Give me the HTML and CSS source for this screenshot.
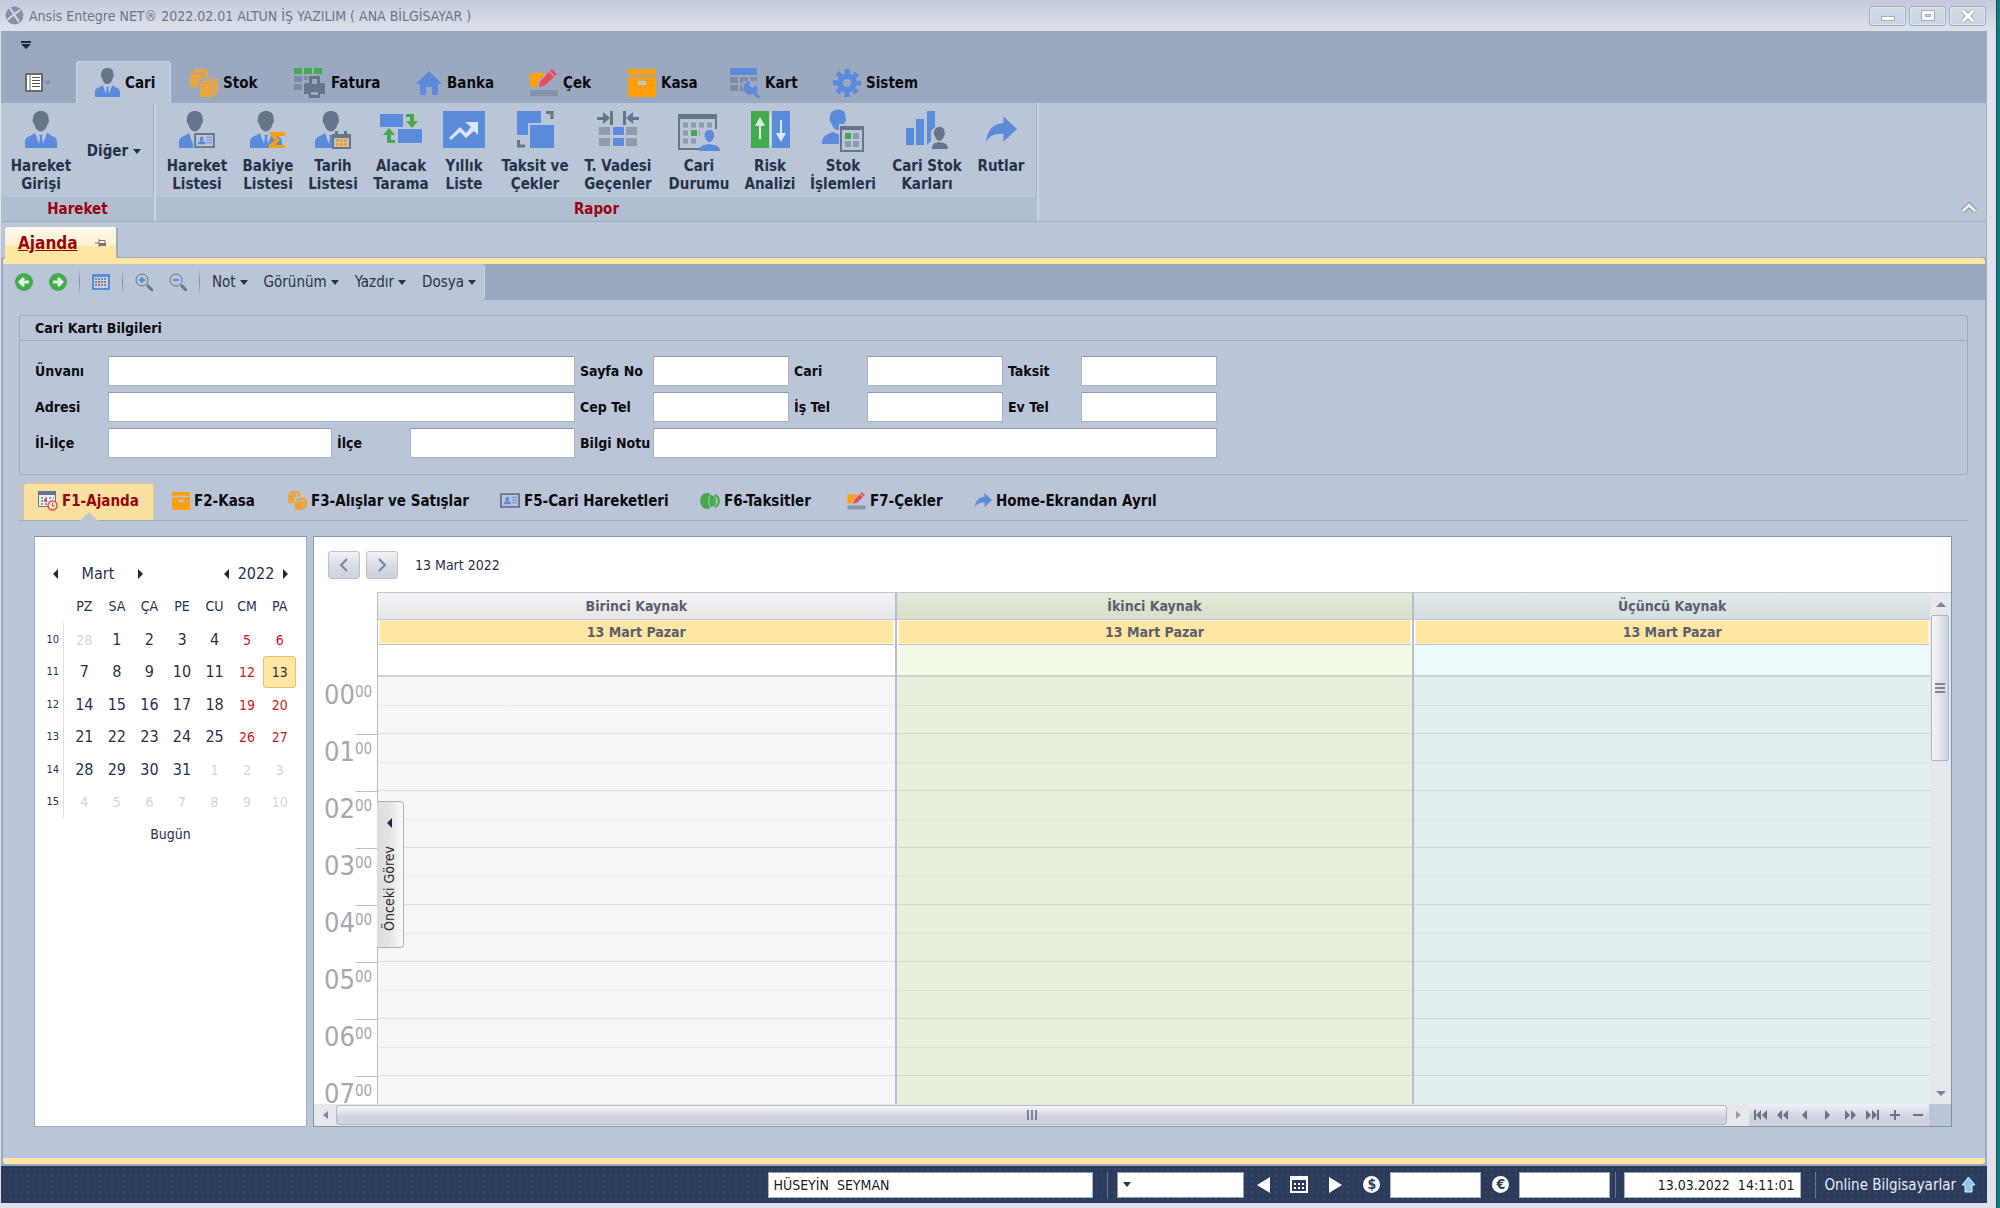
FILE: index.html
```html
<!DOCTYPE html>
<html lang="tr">
<head>
<meta charset="utf-8">
<title>Ansis Entegre NET</title>
<link rel="stylesheet" href="styles.css">
</head>
<body>
<svg class="defs" aria-hidden="true">
  <symbol id="head" viewBox="0 0 32 37"><path d="M8 8C8 2 12 0 16 0s8 2 7.5 8c1 1 .5 4-.8 4.6C22 17 19 20.5 15.8 20.5S10 17 9 12.6C7.6 12 7 9 8 8z"/></symbol>
  <symbol id="person" viewBox="0 0 32 37"><use href="#head" width="32" height="37" fill="#677489"/><path fill="#5b8bdb" d="M0 37v-5c0-5 2-6 5-7l5-3 4 11 1-7-1-2h4l-1 2 1 7 4-11 5 3c3 1 5 2 5 7v5z"/></symbol>
  <symbol id="boxes" viewBox="0 0 28 28"><g fill="#eba53c"><path d="M0 5h12v5H9v8H0zM1 4l4-4h12l-3 4zM14 5l4-4v7h-4zM10 15h13v13H10zM11 14l4-4h13l-4 4zM24 15l4-4v12l-4 4z"/></g></symbol>
  <symbol id="edit" viewBox="0 0 28 28"><path fill="#ff9f0a" d="M0 4h16L8 13v5H0z"/><path fill="#ec4b5c" d="M9 18l1-5L19 3l5 5-10 9zM20 2l2-2 5 5-2 2z"/><path fill="#8793a9" d="M0 21h28v6H0z"/></symbol>
  <symbol id="box" viewBox="0 0 28 28"><path fill="#ff9f0a" d="M0 0h28v6H0zM0 8h28v20H0z"/><path fill="#bac6d8" d="M10 12h8v4h-8z"/></symbol>
  <symbol id="share" viewBox="0 0 32 28"><path fill="#5b8bdb" d="M0 26C1 14 8 7 18 7V0l14 13-14 13v-8C9 17 4 20 0 26z"/></symbol>
  <symbol id="idcard" viewBox="0 0 22 16"><path fill="#bac6d8" stroke="#677489" stroke-width="2" d="M1 1h20v14H1z"/><path fill="#5b8bdb" d="M4 12c0-3 1-3 3-3 0-1-1-2-1-3 0-3 4-3 4 0 0 1-1 2-1 3 2 0 3 0 3 3z"/><path stroke="#5b8bdb" d="M13 4.500h6M13 7.500h6M13 10.500h6"/></symbol>
</svg>

<div class="window">
  <header class="titlebar">
    <svg width="19" height="19" viewBox="0 0 19 19"><circle cx="9.500" cy="9.500" r="9" fill="#8492a8"/><path d="M5 2l9 14M15 4L2 14" stroke="#d5dae6" stroke-width="2"/></svg>
    <h1>Ansis Entegre NET® 2022.02.01 ALTUN İŞ YAZILIM ( ANA BİLGİSAYAR )</h1>
    <div class="win-buttons">
      <button aria-label="Simge durumuna küçült"><svg width="16" height="14"><path d="M1.500 7.500h13v4h-13z" fill="#fff" stroke="#a3aabc"/></svg></button>
      <button aria-label="Ekranı kapla"><svg width="16" height="14"><path d="M1.500 1.500h13v10h-13z" fill="#f6f8fb" stroke="#a3aabc"/><path d="M5.500 5.500h5v2h-5z" fill="#c9d5e3" stroke="#a3aabc"/></svg></button>
      <button aria-label="Kapat"><svg width="16" height="14"><path d="M3 2l10 10M13 2L3 12" stroke="#a3aabc" stroke-width="5"/><path d="M3 2l10 10M13 2L3 12" stroke="#fff" stroke-width="3"/></svg></button>
    </div>
  </header>

  <div class="client">
    <div class="quick"><button aria-label="Hızlı erişim"><svg width="10" height="8"><path d="M0 0h10v2H0zM0 3h10L5 8z" fill="#1d2a40"/></svg></button></div>
    <nav class="ribbon-tabs">
      <button class="app" aria-label="Menü"><svg width="26" height="20"><path d="M1 1h16v17H1z" fill="#fff" stroke="#6b6b6b" stroke-width="2"/><path d="M5 1v17" stroke="#6b6b6b"/><path d="M7 4.500h8M7 7.500h8M7 10.500h8M7 13.500h8" stroke="#555"/><path d="M19 8h7l-3.500 4z" fill="#848d9c"/></svg></button>
      <button class="on"><svg width="25" height="29" viewBox="0 0 32 37"><use href="#person" width="32" height="37"/></svg>Cari</button>
      <button><svg width="28" height="28"><use href="#boxes" width="28" height="28"/></svg>Stok</button>
      <button><svg width="32" height="30" viewBox="0 0 32 30"><path fill="#43ab4b" d="M0 0h8v6H0zM10 0h8v6h-8zM20 0h8v6h-8z"/><path fill="#7f8ca3" d="M0 8h8v6H0zM0 16h8v6H0zM10 8h4v4h-4z"/><path fill="#677489" fill-rule="evenodd" d="M15 8h11v7h3c2 0 2 1 2 2v9h-5v4H15v-4h-5v-9c0-1 0-2 2-2h3zM18 11v5h5v-5zM17 24v3h7v-3z"/></svg>Fatura</button>
      <button><svg width="26" height="24" viewBox="0 0 26 24"><path fill="#5b8bdb" d="M13 0l13 13h-4v11h-6v-8h-6v8H4V13H0z"/></svg>Banka</button>
      <button><svg width="28" height="28"><use href="#edit" width="28" height="28"/></svg>Çek</button>
      <button><svg width="28" height="28"><use href="#box" width="28" height="28"/></svg>Kasa</button>
      <button><svg width="30" height="30" viewBox="0 0 30 30"><path fill="#5b8bdb" d="M0 0h27v7H0z"/><path fill="#7f8ca3" d="M0 9h8v6H0zM10 9h8v4h-5v2h-3zM0 17h8v6H0zM10 17h2v3l3 3h-5zM20 9h7v4h-7z"/><path fill="#5b8bdb" d="M18 13l2 1-1 4 4 2 3-3 1 2c1 3 0 4-1 5l4 5-2 2-5-5c-4 2-8 0-9-4-1-3 0-7 4-9z"/></svg>Kart</button>
      <button><svg width="28" height="28" viewBox="-14 -14 28 28"><circle r="11.500" fill="none" stroke="#5b8bdb" stroke-width="5" stroke-dasharray="5 4.030" stroke-dashoffset="2.500"/><circle r="10" fill="#5b8bdb"/><circle r="4" fill="#9ba9c0"/></svg>Sistem</button>
    </nav>

    <section class="ribbon">
      <div class="group g1">
        <div class="tools">
          <button class="tool"><svg width="32" height="37"><use href="#person" width="32" height="37"/></svg><span>Hareket<br>Girişi</span></button>
          <button class="more">Diğer<i class="caret"></i></button>
        </div>
        <h2>Hareket</h2>
      </div>
      <div class="group g2">
        <div class="tools">
          <button class="tool"><svg width="36" height="37"><use href="#person" width="32" height="37"/><path fill="#bac6d8" d="M14 21h22v16H14z"/><use href="#idcard" x="15" y="22" width="21" height="15"/></svg><span>Hareket<br>Listesi</span></button>
          <button class="tool"><svg width="36" height="37"><use href="#person" width="32" height="37"/><path fill="#ff9f0a" d="M20 21h15v4h-9l4 4-5 5h10v3H19v-3l6-5-5-5z"/></svg><span>Bakiye<br>Listesi</span></button>
          <button class="tool"><svg width="36" height="38"><use href="#person" width="32" height="37"/><path fill="#677489" d="M17 23h3v-3h3v3h6v-3h3v3h4v15H17z"/><path fill="#bac6d8" d="M19 27h15v9H19z"/><path stroke="#ff9f0a" stroke-width="3" stroke-dasharray="3 1" d="M21 29.500h11M21 33.500h11"/></svg><span>Tarih<br>Listesi</span></button>
          <button class="tool"><svg width="42" height="37"><path fill="#5b8bdb" d="M0 3h23v13H0zM18 18h24v14H18z"/><path fill="#43ab4b" d="M26 3h8v7h4l-6 7-6-7h4V6h-4zM9 17l6 7h-4v5h4v3H7v-8H3z"/></svg><span>Alacak<br>Tarama</span></button>
          <button class="tool"><svg width="42" height="37"><path fill="#5b8bdb" d="M0 0h42v37H0z"/><path fill="#dbe5f5" d="M22 11h13v13l-4-4-8 7-6-6-9 8-2-2 11-11 6 6 5-6z"/></svg><span>Yıllık<br>Liste</span></button>
          <button class="tool"><svg width="37" height="37"><path fill="#5b8bdb" d="M0 0h24v12H11v12H0zM13 14h24v23H13z"/><path fill="none" stroke="#677489" stroke-width="3" d="M29 1.500h6V8M1.500 29v6H8"/></svg><span>Taksit ve<br>Çekler</span></button>
          <button class="tool"><svg width="42" height="37"><path fill="#909cae" d="M2 16h11v8H2zM2 27h11v8H2zM29 16h11v8H29zM29 27h11v8H29z"/><path fill="#5b8bdb" d="M16 16h11v8H16zM16 27h11v8H16z"/><path fill="#677489" d="M0 6h6V1l7 6-7 6V9H0zM13 0h3v14h-3zM26 0h3v14h-3zM29 7l7-6v5h6v3h-6v4z"/></svg><span>T. Vadesi<br>Geçenler</span></button>
          <button class="tool"><svg width="42" height="38"><path fill="none" stroke="#677489" stroke-width="2" d="M1 4h37v14M22 38H1V4"/><path fill="#677489" d="M0 3h39v5H0z"/><path stroke="#909cae" stroke-width="5" stroke-dasharray="5 3" d="M5 14h29M5 22h17M5 30h15"/><path fill="#43ab4b" d="M13 19h6v6h-6z"/><use href="#head" x="22" y="18" width="19" height="24" fill="#5b8bdb"/><path fill="#5b8bdb" d="M21 40c0-5 4-6 10-7 7 1 11 2 11 7z"/></svg><span>Cari<br>Durumu</span></button>
          <button class="tool"><svg width="39" height="37"><path fill="#43ab4b" d="M0 0h18v37H0z"/><path fill="#5b8bdb" d="M21 0h18v37H21z"/><path fill="#dce8ee" d="M19 4h1v30h-1zM9 6l5 9h-4v13H8V15H4zM30 31l5-9h-4V9h-2v13h-4z"/></svg><span>Risk<br>Analizi</span></button>
          <button class="tool"><svg width="42" height="37"><use href="#head" x="0" y="-2" width="32" height="38" fill="#5b8bdb"/><path fill="#5b8bdb" d="M0 33c0-8 3-9 11-12l7 3v9z"/><path fill="#bac6d8" d="M17 13h25v27H17z"/><path fill="none" stroke="#677489" stroke-width="2" d="M19 16h22v24H19z"/><path fill="#677489" d="M18 15h24v4H18z"/><path fill="#43ab4b" d="M23 22h6v6h-6z"/><path fill="#909cae" d="M31 22h6v6h-6zM23 30h6v6h-6zM31 30h6v6h-6z"/></svg><span>Stok<br>İşlemleri</span></button>
          <button class="tool"><svg width="42" height="38"><path fill="#5b8bdb" d="M0 17h8v17H0zM10 8h8v26h-8zM21 0h8v16l-4 4v10l-4 4z"/><use href="#head" x="22" y="16" width="23" height="25" fill="#677489"/><path fill="#677489" d="M26 38c0-5 2-6 7-7 6 1 9 2 9 7z"/></svg><span>Cari Stok<br>Karları</span></button>
          <button class="tool"><svg width="31" height="37"><use href="#share" y="5" width="31" height="28"/></svg><span>Rutlar</span></button>
        </div>
        <h2>Rapor</h2>
      </div>
      <button class="collapse" aria-label="Şeridi daralt"><svg width="18" height="14"><path d="M3 10l6-6 6 6" fill="none" stroke="#838b9c" stroke-width="5"/><path d="M3 10l6-6 6 6" fill="none" stroke="#eef1f6" stroke-width="3"/></svg></button>
    </section>

    <div class="doc-tabs">
      <a href="#ajanda" class="doc-tab"><span>Ajanda</span><svg width="11" height="10"><path d="M0 5h4M4 1v8M4 2.500h6v5H4" stroke="#777" fill="none" stroke-width="1"/><path d="M4 5h7v3H4z" fill="#777"/></svg></a>
    </div>

    <main class="doc" id="ajanda">
      <div class="toolbar">
        <div class="bar">
          <button aria-label="Geri"><svg width="18" height="18"><circle cx="9" cy="9" r="9" fill="#43ab4b"/><path d="M14 9H6M9 5L5 9l4 4" fill="none" stroke="#e4efe6" stroke-width="3"/></svg></button>
          <button aria-label="İleri"><svg width="18" height="18"><circle cx="9" cy="9" r="9" fill="#43ab4b"/><path d="M4 9h8M9 5l4 4-4 4" fill="none" stroke="#e4efe6" stroke-width="3"/></svg></button>
          <i class="sep"></i>
          <button aria-label="Takvim"><svg width="18" height="16"><path fill="#c6d0e0" stroke="#5b8bdb" stroke-width="2" d="M1 1h16v14H1z"/><path fill="#5b8bdb" d="M0 0h18v3H0z"/><path stroke="#7d899c" stroke-width="2" stroke-dasharray="2 1" d="M3 5h12M3 8h12M3 11h12"/><path fill="#ec4b5c" d="M6 7h2v2H6z"/></svg></button>
          <i class="sep"></i>
          <button aria-label="Yakınlaştır"><svg width="18" height="18"><circle cx="7" cy="7" r="6" fill="none" stroke="#677489"/><path d="M4 7h6M7 4v6" stroke="#5b8bdb" stroke-width="2"/><path d="M12 12l6 6" stroke="#677489" stroke-width="3"/></svg></button>
          <button aria-label="Uzaklaştır"><svg width="18" height="18"><circle cx="7" cy="7" r="6" fill="none" stroke="#677489"/><path d="M4 7h6" stroke="#5b8bdb" stroke-width="2"/><path d="M12 12l6 6" stroke="#677489" stroke-width="3"/></svg></button>
          <i class="sep"></i>
          <button class="menu">Not<i class="caret"></i></button>
          <button class="menu">Görünüm<i class="caret"></i></button>
          <button class="menu">Yazdır<i class="caret"></i></button>
          <button class="menu">Dosya<i class="caret"></i></button>
        </div>
      </div>

      <section class="card">
        <h2>Cari Kartı Bilgileri</h2>
        <form class="fields">
          <label for="unvan">Ünvanı</label><input id="unvan" class="wide">
          <label for="sayfa">Sayfa No</label><input id="sayfa">
          <label for="cari">Cari</label><input id="cari">
          <label for="taksit">Taksit</label><input id="taksit">
          <label for="adres">Adresi</label><input id="adres" class="wide">
          <label for="cep">Cep Tel</label><input id="cep">
          <label for="is">İş Tel</label><input id="is">
          <label for="ev">Ev Tel</label><input id="ev">
          <label for="il">İl-İlçe</label><input id="il">
          <label for="ilce">İlçe</label><input id="ilce">
          <label for="not">Bilgi Notu</label><input id="not" class="note">
        </form>
      </section>

      <nav class="views">
        <button class="on"><svg width="20" height="20"><path fill="#eceef0" stroke="#677489" d="M.5.500h17v15H.5z"/><path fill="#677489" d="M0 0h18v4H0z"/><path stroke="#909cae" stroke-width="2" stroke-dasharray="2 2" d="M3 7h13M3 10h8M3 13h7"/><path fill="#ec4b5c" d="M6 8h3v3H6z"/><circle cx="14.500" cy="14.500" r="4.500" fill="#f6e3b4" stroke="#ec4b5c" stroke-width="1.500"/><path fill="none" stroke="#677489" d="M14.500 12v3h2"/></svg>F1-Ajanda</button>
        <button><svg width="18" height="18"><use href="#box" width="18" height="18"/></svg>F2-Kasa</button>
        <button><svg width="19" height="19"><use href="#boxes" width="19" height="19"/></svg>F3-Alışlar ve Satışlar</button>
        <button><svg width="20" height="15"><use href="#idcard" width="20" height="15"/></svg>F5-Cari Hareketleri</button>
        <button><svg width="20" height="16"><ellipse cx="7" cy="8" rx="7" ry="8" fill="#43ab4b"/><path fill="none" stroke="#bac6d8" d="M11 1c-3 4-3 10 0 14"/><path fill="none" stroke="#43ab4b" stroke-width="2" d="M13 3c3 3 3 7 0 10M15 2c5 2 5 10 0 12"/></svg>F6-Taksitler</button>
        <button><svg width="19" height="18"><use href="#edit" width="19" height="18"/></svg>F7-Çekler</button>
        <button><svg width="17" height="15"><use href="#share" width="17" height="15"/></svg>Home-Ekrandan Ayrıl</button>
      </nav>

      <div class="agenda">
        <aside class="calendar">
          <div class="cal-head">
            <button aria-label="Önceki ay"><i class="tri left"></i></button><span class="m">Mart</span><button aria-label="Sonraki ay"><i class="tri right"></i></button>
            <button class="yr" aria-label="Önceki yıl"><i class="tri left"></i></button><span>2022</span><button aria-label="Sonraki yıl"><i class="tri right"></i></button>
          </div>
          <table>
            <thead><tr><th></th><th>PZ</th><th>SA</th><th>ÇA</th><th>PE</th><th>CU</th><th>CM</th><th>PA</th></tr></thead>
            <tbody>
              <tr><th>10</th><td class="out">28</td><td>1</td><td>2</td><td>3</td><td>4</td><td class="we">5</td><td class="we">6</td></tr>
              <tr><th>11</th><td>7</td><td>8</td><td>9</td><td>10</td><td>11</td><td class="we">12</td><td class="today"><span>13</span></td></tr>
              <tr><th>12</th><td>14</td><td>15</td><td>16</td><td>17</td><td>18</td><td class="we">19</td><td class="we">20</td></tr>
              <tr><th>13</th><td>21</td><td>22</td><td>23</td><td>24</td><td>25</td><td class="we">26</td><td class="we">27</td></tr>
              <tr><th>14</th><td>28</td><td>29</td><td>30</td><td>31</td><td class="out">1</td><td class="out">2</td><td class="out">3</td></tr>
              <tr><th>15</th><td class="out">4</td><td class="out">5</td><td class="out">6</td><td class="out">7</td><td class="out">8</td><td class="out">9</td><td class="out">10</td></tr>
            </tbody>
          </table>
          <button class="today-btn">Bugün</button>
        </aside>

        <section class="scheduler">
          <div class="sch-head">
            <button aria-label="Önceki gün"><svg width="10" height="14"><path d="M8 1L2 7l6 6" fill="none" stroke="#7c8699" stroke-width="2"/></svg></button>
            <button aria-label="Sonraki gün"><svg width="10" height="14"><path d="M2 1l6 6-6 6" fill="none" stroke="#7c8699" stroke-width="2"/></svg></button>
            <span>13 Mart 2022</span>
          </div>
          <div class="sch-body">
            <div class="hours">
              <div>00<sup>00</sup></div><div>01<sup>00</sup></div><div>02<sup>00</sup></div><div>03<sup>00</sup></div><div>04<sup>00</sup></div><div>05<sup>00</sup></div><div>06<sup>00</sup></div><div>07<sup>00</sup></div>
            </div>
            <div class="resources">
              <div class="res gray"><h3>Birinci Kaynak</h3><h4>13 Mart Pazar</h4><div class="allday"></div><div class="slots"></div></div>
              <div class="res green"><h3>İkinci Kaynak</h3><h4>13 Mart Pazar</h4><div class="allday"></div><div class="slots"></div></div>
              <div class="res blue"><h3>Üçüncü Kaynak</h3><h4>13 Mart Pazar</h4><div class="allday"></div><div class="slots"></div></div>
              <button class="prev-task"><i class="tri left"></i><span>Önceki Görev</span></button>
            </div>
            <div class="vscroll"><button aria-label="Yukarı"><i class="tri up"></i></button><div class="vthumb"><i></i><i></i><i></i></div><button aria-label="Aşağı"><i class="tri down"></i></button></div>
          </div>
          <div class="hscroll">
            <button aria-label="Sola"><i class="tri left"></i></button>
            <div class="hthumb"><i></i><i></i><i></i></div>
            <button aria-label="Sağa"><i class="tri right"></i></button>
            <div class="pager">
              <button aria-label="İlk"><svg width="13" height="10"><path d="M0 0h2v10H0zM7 0v10L2 5zM13 0v10L8 5z"/></svg></button>
              <button aria-label="Geri sayfa"><svg width="11" height="10"><path d="M5 0v10L0 5zM11 0v10L6 5z"/></svg></button>
              <button aria-label="Geri"><svg width="6" height="10"><path d="M5 0v10L0 5z"/></svg></button>
              <button aria-label="İleri"><svg width="6" height="10"><path d="M0 0v10l5-5z"/></svg></button>
              <button aria-label="İleri sayfa"><svg width="11" height="10"><path d="M0 0v10l5-5zM6 0v10l5-5z"/></svg></button>
              <button aria-label="Son"><svg width="13" height="10"><path d="M0 0v10l5-5zM6 0v10l5-5zM11 0h2v10h-2z"/></svg></button>
              <button aria-label="Ekle"><svg width="10" height="10"><path d="M4 0h2v4h4v2H6v4H4V6H0V4h4z"/></svg></button>
              <button aria-label="Çıkar"><svg width="10" height="10"><path d="M0 4h10v2H0z"/></svg></button>
            </div>
            <div class="corner"></div>
          </div>
        </section>
      </div>
    </main>

    <footer class="status">
      <input class="user" aria-label="Kullanıcı" value="HÜSEYİN  SEYMAN">
      <i class="sep"></i>
      <button class="combo" aria-label="Döviz seçimi"><i class="caret"></i></button>
      <button class="st" aria-label="Önceki"><svg width="13" height="16"><path fill="#fff" d="M13 0v16L0 8z"/></svg></button>
      <button class="st" aria-label="Takvim"><svg width="18" height="17"><path fill="none" stroke="#fff" stroke-width="2" d="M1 1h16v15H1z"/><path fill="#fff" d="M0 0h18v4H0z"/><path stroke="#fff" stroke-width="2" stroke-dasharray="2 2" d="M4 8h11M4 12h11"/></svg></button>
      <button class="st" aria-label="Sonraki"><svg width="13" height="16"><path fill="#fff" d="M0 0v16l13-8z"/></svg></button>
      <label class="coin" for="usd">$</label><input id="usd" class="rate">
      <label class="coin" for="eur">€</label><input id="eur" class="rate">
      <i class="sep"></i>
      <input class="clock" aria-label="Tarih ve saat" value="13.03.2022  14:11:01">
      <i class="sep"></i>
      <a href="#online">Online Bilgisayarlar <svg width="15" height="17"><path fill="#8fc7f0" stroke="#d8edfb" d="M7.500 1L14 9h-3v7H4V9H1z"/></svg></a>
    </footer>
  </div>
</div>
</body>
</html>
```
FILE: styles.css
```css
:root {
  --panel: #bac6d8;
  --deep: #9ba9c0;
  --line: #9eabc2;
  --yellow: #ffe6a2;
  --ink: #26334a;
}
* { box-sizing: border-box; }
body {
  margin: 0;
  height: 100vh;
  overflow: hidden;
  border-right: 3px solid #028383;
  font: 15px/18px "DejaVu Sans Condensed", "Noto Sans", sans-serif;
  color: var(--ink);
  background: #dfe2ea;
}
h1, h2, h3, h4 { margin: 0; font-size: inherit; }
button {
  display: flex;
  align-items: center;
  justify-content: center;
  padding: 0;
  border: 0;
  background: none;
  font: inherit;
  color: inherit;
}
svg { display: block; flex: none; }
.defs { position: absolute; width: 0; height: 0; }
a { color: inherit; }
input {
  min-width: 0;
  width: 100%;
  height: 30px;
  border: 1px solid #a5b2c8;
  border-top-color: #8f9db5;
  border-radius: 0;
  background: #fff;
  font: inherit;
  font-size: 14px;
  color: #1c1c1c;
}
.caret { border: 4px solid transparent; border-top: 5px solid var(--ink); border-bottom: 0; }
.tri { border: 5px solid transparent; }
.tri.left { border-right-color: #1d2a40; border-left: 0; }
.tri.right { border-left-color: #1d2a40; border-right: 0; }
.tri.up { border-bottom-color: #7d8594; border-top: 0; }
.tri.down { border-top-color: #7d8594; border-bottom: 0; }

.window {
  display: flex;
  flex-direction: column;
  height: 100%;
  padding: 0 9px 5px 1px;
  border-right: 1px solid #3a4048;
}
.titlebar {
  display: flex;
  align-items: center;
  gap: 5px;
  height: 31px;
  flex: none;
  margin: 0 -9px 0 -1px;
  padding: 0 10px 0 5px;
  background: linear-gradient(#c4cadb, #dde2ea);
}
.titlebar h1 { font-size: 14px; font-weight: 400; color: #69758b; }
.win-buttons { display: flex; gap: 3px; margin-left: auto; }
.win-buttons button {
  width: 37px;
  height: 20px;
  border: 1px solid #a3aabc;
  border-radius: 3px;
  background: linear-gradient(#d3dbe2, #c8d6e4);
  box-shadow: inset 0 0 0 1px #dfe5ec;
}

.client { display: flex; flex-direction: column; flex: 1; min-height: 0; background: var(--deep); border-right: 1px solid #a3adc3; }
.quick { height: 30px; flex: none; padding: 10px 0 0 20px; }
.ribbon-tabs {
  display: grid;
  grid-template-columns: 75px 95px 104px 122px 114px 98px 102px 103px 120px;
  height: 42px;
  flex: none;
  font-size: 15px;
  font-weight: 700;
  color: #0c0c10;
}
.ribbon-tabs button { justify-content: flex-start; gap: 5px; padding: 1px 0 0 19px; }
.ribbon-tabs .app { padding-left: 24px; }
.ribbon-tabs .on { background: var(--panel); border-radius: 4px 4px 0 0; box-shadow: inset 1px 1px #c9d3e2, inset -1px 0 #c9d3e2; }

.ribbon {
  display: flex;
  height: 119px;
  flex: none;
  background: var(--panel);
  border-bottom: 1px solid var(--line);
  font-weight: 700;
}
.group { display: flex; flex-direction: column; border-right: 2px solid #c9d3e2; box-shadow: inset -1px 0 #a6b3c9; }
.g1 { width: 155px; }
.g2 { width: 883px; }
.tools { display: grid; height: 96px; padding-top: 8px; }
.g1 .tools { grid-template-columns: 80px 66px; }
.g2 .tools { padding-left: 5px; grid-template-columns: 72px 70px 60px 76px 50px 92px 74px 88px 54px 92px 76px 72px; }
.tool { flex-direction: column; justify-content: flex-start; gap: 9px; white-space: nowrap; }
.tool svg { height: 37px; overflow: visible; }
.more { gap: 5px; height: 80px; }
.group h2 { flex: 1; background: #b1bed2; color: #98050f; line-height: 24px; text-align: center; font-size: 15px; }
.collapse { margin: auto 8px 6px auto; }

.doc-tabs { height: 36px; flex: none; padding: 5px 0 0 4px; background: var(--panel); border-bottom: 1px solid var(--line); }
.doc-tab {
  display: flex;
  align-items: center;
  justify-content: space-between;
  width: 113px;
  height: 31px;
  padding: 0 10px 0 13px;
  border-right: 2px solid var(--line);
  border-radius: 3px 3px 0 0;
  background: linear-gradient(#fffaf0, #fff0cb 60%, var(--yellow) 62%);
  color: #98050f;
  font-size: 17px;
  font-weight: 700;
}
.doc {
  display: flex;
  flex-direction: column;
  flex: 1;
  min-height: 0;
  margin: 0 1px 0 2px;
  border-top: 6px solid var(--yellow);
  border-bottom: 6px solid var(--yellow);
  border-radius: 3px;
  background: var(--panel);
}
.toolbar { height: 36px; flex: none; background: var(--deep); }
.bar { display: flex; align-items: center; width: 482px; height: 36px; padding-left: 4px; background: var(--panel); border-right: 1px solid #c9d3e2; border-radius: 0 4px 4px 0; }
.bar button { width: 34px; }
.sep { width: 1px; height: 26px; margin: 0 4px; background: linear-gradient(transparent, #7f8ca3, transparent); }
.bar .menu { flex: auto; width: auto; gap: 4px; font-size: 15px; }

.card { margin: 15px 17px 0 16px; border: 1px solid var(--line); border-radius: 3px; box-shadow: inset 0 0 0 1px #bfcadb; color: #0c0c10; font-size: 14px; font-weight: 700; }
.card h2 { padding-left: 15px; line-height: 24px; border-bottom: 1px solid var(--line); }
.fields {
  display: grid;
  grid-template-columns: 73px 224px 78px 165px 78px 136px 78px 136px 78px 136px;
  grid-auto-rows: 30px;
  row-gap: 6px;
  align-items: center;
  padding: 15px 0 16px 15px;
}
.fields label { white-space: nowrap; }
.fields label:nth-of-type(n+2) { padding-left: 5px; }
.fields label[for="adres"], .fields label[for="il"] { padding-left: 0; }
.fields .wide { grid-column: span 3; }
.fields .note { grid-column: span 5; }

.views {
  display: grid;
  grid-template-columns: 131px 120px 212px 200px 147px 128px 220px;
  height: 38px;
  flex: none;
  margin: 8px 17px 0 16px;
  padding-left: 4px;
  border-bottom: 1px solid var(--line);
  color: #0c0c10;
  font-size: 15px;
  font-weight: 700;
}
.views button { justify-content: flex-start; gap: 4px; padding-left: 14px; padding-bottom: 2px; white-space: nowrap; }
.views button:nth-child(2) { padding-left: 18px; }
.views .on { position: relative; background: #f8e0a0; border: 1px solid #d8c58f; border-bottom: 0; border-radius: 3px 3px 0 0; color: #98050f; }
.views .on::after {
  content: "";
  position: absolute;
  left: 56px;
  bottom: -1px;
  border: 9px solid transparent;
  border-top: 0;
  border-bottom-color: var(--panel);
}

.agenda { display: flex; flex: 1; min-height: 0; gap: 6px; padding: 15px 33px 31px 31px; }
.calendar { width: 273px; flex: none; padding: 26px 10px 0 4px; border: 1px solid #a0adc3; border-top-color: #8593aa; background: #fff; }
.cal-head { display: flex; align-items: center; height: 22px; padding: 0 8px 0 14px; font-size: 16px; }
.cal-head .m { width: 80px; text-align: center; }
.cal-head .yr { margin-left: auto; }
.cal-head span:not(.m) { width: 54px; text-align: center; }
.calendar table { width: 100%; table-layout: fixed; border-collapse: collapse; text-align: center; }
.calendar th, .calendar td { padding: 0; height: 32px; font-size: 16px; font-weight: 400; }
.calendar tr:nth-child(odd) td { height: 33px; }
.calendar thead th { height: 38px; padding-top: 4px; font-size: 14px; }
.calendar thead th:first-child { width: 29px; }
.calendar tbody th {
  padding-right: 9px;
  background: linear-gradient(#dcdfe4, #dcdfe4) 24px 0 / 1px 100% no-repeat;
  font-size: 11px;
  text-align: right;
}
.calendar .we { color: #cf1820; font-size: 14px; }
.calendar .out { color: #d3d5d9; font-size: 14px; }
.calendar .today { font-size: 14px; }
.today span { display: grid; place-items: center; height: 32px; border: 1px solid #e5c365; border-radius: 3px; background: var(--yellow); }
.today-btn { margin: 7px auto 0; padding-left: 6px; font-size: 14px; }

.scheduler { display: flex; flex-direction: column; flex: 1; min-width: 0; border: 1px solid #8593aa; background: #fff; }
.sch-head { display: flex; align-items: center; gap: 6px; height: 55px; flex: none; padding-left: 14px; font-size: 14px; }
.sch-head button { width: 32px; height: 28px; border: 1px solid #bcc1cd; border-radius: 3px; background: linear-gradient(#f2f3f6, #d9dde6 50%, #cbd1df); }
.sch-head span { margin-left: 11px; }
.sch-body { display: flex; flex: 1; min-height: 0; overflow: hidden; }
.hours { width: 63px; flex: none; padding-top: 85px; color: #a5a8ae; font-size: 27px; }
.hours div { display: flex; height: 57px; padding: 9px 0 0 10px; line-height: 18px; background: linear-gradient(#b4bfd2, #b4bfd2) right top / 21px 1px no-repeat; }
.hours div:first-child { background: none; }
.hours sup { font-size: 15px; line-height: 12px; vertical-align: top; }
.resources { position: relative; display: grid; grid-template-columns: 1fr 1fr 1fr; flex: 1; border-top: 1px solid #c3c8d0; }
.res { display: flex; flex-direction: column; border-left: 2px solid #b3bfd0; }
.res.gray { border-left-width: 1px; }
.res h3, .res h4 { text-align: center; color: #59606d; font-size: 14px; font-weight: 700; }
.res h3 { line-height: 26px; border-bottom: 1px solid #c1c7cf; }
.res h4 { line-height: 22px; padding: 1px 0; margin: 0 1px; background: var(--yellow); box-shadow: inset 0 0 0 1px #fff3d2; border-bottom: 1px solid #b9c1cf; }
.gray h3 { background: linear-gradient(#f4f4f4, #e6e6e6); }
.green h3 { background: linear-gradient(#e2ebd6, #d6dfca); }
.blue h3 { background: linear-gradient(#e2ebeb, #d4dddf); }
.allday { height: 32px; flex: none; border-bottom: 2px solid #ccd2d2; }
.green .allday { background: #f2fae6; }
.blue .allday { background: #edfafc; }
.slots { flex: 1; background: repeating-linear-gradient(#0000 0 28px, #0000000d 28px 29px, #0000 29px 56px, #00000018 56px 57px); }
.gray .slots { background-color: #f6f6f6; }
.green .slots { background-color: #e7f0dc; }
.blue .slots { background-color: #e3eeef; }
.prev-task {
  position: absolute;
  left: 0;
  top: 208px;
  flex-direction: column;
  gap: 18px;
  width: 27px;
  height: 147px;
  padding-right: 2px;
  border: 1px solid #b0b0b0;
  border-left: 0;
  border-radius: 0 4px 4px 0;
  background: linear-gradient(90deg, #dcdcdc, #e4e4e4 50%, #fbfbfb);
  color: #2a2a2a;
  font-size: 14px;
}
.prev-task span { writing-mode: vertical-rl; rotate: 180deg; line-height: 18px; }
.vscroll { display: flex; flex-direction: column; width: 21px; flex: none; border-top: 1px solid #c3c8d0; background: #e6e8eb; }
.vscroll button { height: 22px; }
.vscroll button:last-child { margin-top: auto; }
.vthumb { display: flex; flex-direction: column; align-items: center; justify-content: center; gap: 2px; height: 146px; margin: 0 2px 0 1px; border: 1px solid #b3b7c1; border-radius: 2px; background: linear-gradient(90deg, #f5f6f8, #cdd3e0); }
.vthumb i { width: 10px; height: 2px; background: #7d8594; }
.hscroll { display: flex; height: 22px; flex: none; background: #e6e8eb; }
.hscroll > button { width: 22px; }
.hscroll .tri { border-width: 4px; border-left-color: transparent; border-right-color: transparent; }
.hscroll .tri.left { border-left: 0; border-right: 5px solid #7d8594; }
.hscroll .tri.right { border-right: 0; border-left: 5px solid #9aa0ac; }
.hthumb { display: flex; align-items: center; justify-content: center; gap: 2px; flex: 1; margin: 1px 0; border: 1px solid #b3b7c1; border-radius: 3px; background: linear-gradient(#f5f6f8, #cdd3e0 60%); }
.hthumb i { width: 2px; height: 10px; background: #7d8594; }
.pager { display: grid; grid-template-columns: repeat(8, 1fr); width: 180px; background: linear-gradient(#f0f1f4, #cdd3e0 60%); fill: #6d7380; }
.corner { width: 22px; background: var(--panel); }

.status {
  display: flex;
  align-items: center;
  height: 39px;
  flex: none;
  margin-right: -1px;
  padding-right: 11px;
  border-top: 2px solid var(--deep);
  background: #2b3b5a radial-gradient(#33456a 1px, transparent 1px) 0 0 / 6px 6px;
  color: #fff;
  font-size: 15px;
}
.status input { flex: none; height: 26px; font-size: 14px; padding: 0 4px; white-space: pre; }
.status .user { width: 325px; margin-left: auto; }
.status .sep { flex: none; margin: 0 9px 0 14px; background: #6a7890; }
.combo { justify-content: flex-start; width: 127px; height: 26px; padding-left: 5px; border: 1px solid #8f9db5; background: #fff; }
.st { width: 34px; margin-left: 2px; }
.coin { display: grid; place-items: center; width: 17px; height: 17px; margin: 0 10px 0 11px; border-radius: 50%; background: #fff; color: #2b3b5a; font-size: 14px; font-weight: 700; line-height: 17px; }
.status .rate { width: 91px; }
.status .rate + .sep { margin: 0 8px 0 5px; }
.status .clock { width: 177px; padding-right: 6px; text-align: right; }
.status .clock + .sep { margin-right: 8px; }
.status a { display: flex; align-items: center; gap: 5px; color: #e8ecf3; text-decoration: none; }
```
